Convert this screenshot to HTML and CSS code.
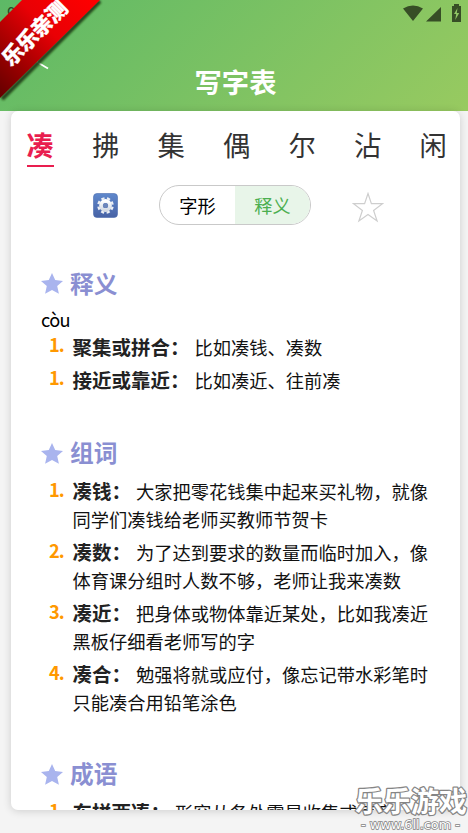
FILE: index.html
```html
<!DOCTYPE html>
<html lang="zh-CN">
<head>
<meta charset="utf-8">
<title>写字表</title>
<link rel="stylesheet" href="styles.css">
</head>
<body>
<svg class="defs" width="0" height="0"><defs>
<linearGradient id="blue" x2="0" y2="1"><stop stop-color="#5f88cc"/><stop offset="1" stop-color="#4762a5"/></linearGradient>
<linearGradient id="silver" x2="0" y2="1"><stop stop-color="#fff"/><stop offset="1" stop-color="#d4dae4"/></linearGradient>
<symbol id="star" viewBox="0 0 22 21"><path d="M11 0l3.2 7.1 7.8.8-5.8 5.2 1.7 7.7-6.9-3.9-6.9 3.9 1.7-7.7L0 7.9l7.8-.8z" fill="#a9b4ee"/></symbol>
</defs></svg>
<header class="header">
  <svg class="back" width="14" height="10" viewBox="0 0 14 10"><path d="M1 1l11 6.500" stroke="#fff" stroke-width="1.700"/></svg>
  <svg class="status" width="60" height="20" viewBox="0 0 60 20"><g fill="#374e26"><path d="M0 4.500Q10-1.500 20 4.500L10 17zM23 17.500L38 3v14.500zM49 2h2V0h5v2h2v16h-9z"/></g><path d="M54.500 4L51 10h2.200l-1 6 4-7h-2.400z" fill="#91c765"/></svg>
  <h1>写字表</h1>
  <span class="clock">9</span>
  <svg class="ribbon" width="104" height="102" viewBox="0 0 104 102">
    <defs><linearGradient id="red" gradientUnits="userSpaceOnUse" x1="0" y1="96" x2="96" y2="0"><stop stop-color="#650000"/><stop offset=".25" stop-color="#990000"/><stop offset=".6" stop-color="#e90005"/><stop offset="1" stop-color="#f00"/></linearGradient>
    <filter id="soft"><feGaussianBlur stdDeviation="1.300"/></filter></defs>
    <path d="M2 99L100 1" stroke="#24451f" stroke-width="4" filter="url(#soft)"/>
    <path d="M0 22L22 0h78L0 98z" fill="url(#red)"/>
    <text class="ribbon-text" transform="translate(11 67.500) rotate(-45)">乐乐亲测</text>
  </svg>
</header>
<main class="card">
  <nav class="chars"><b>凑</b><span>拂</span><span>集</span><span>偶</span><span>尔</span><span>沾</span><span>闲</span></nav>
  <div class="tools">
    <svg class="gear" width="25" height="25" viewBox="0 0 25 25"><rect x=".5" y=".5" width="24" height="24" rx="3.500" fill="url(#blue)" stroke="#496baf" stroke-width=".6"/><g transform="translate(12.500 12.500)"><circle r="4.500" fill="none" stroke="url(#silver)" stroke-width="3.800"/><circle r="7.200" fill="none" stroke="#edf0f5" stroke-width="2.200" stroke-dasharray="3.200 2.455" transform="rotate(10)"/><circle r="2.500" fill="#6d86bb"/></g></svg>
    <div class="toggle"><span>字形</span><span class="active">释义</span></div>
    <svg class="favorite" width="32" height="31" viewBox="0 0 32 31"><path d="M16 1.500l3.400 10.200H30.500l-8.900 6.700 3.500 10.600L16 22.600 6.900 29l3.500-10.600-8.900-6.700h11.100z" fill="none" stroke="#cecece" stroke-width="1.200"/></svg>
  </div>
  <section class="meaning">
    <h2><svg><use href="#star"/></svg><span>释义</span></h2>
    <p class="pinyin">còu</p>
    <ul>
      <li><i>1.</i><p><b>聚集或拼合：</b>比如凑钱、凑数</p></li>
      <li><i>1.</i><p><b>接近或靠近：</b>比如凑近、往前凑</p></li>
    </ul>
  </section>
  <section class="words">
    <h2><svg><use href="#star"/></svg><span>组词</span></h2>
    <ul>
      <li><i>1.</i><p><b>凑钱：</b>大家把零花钱集中起来买礼物，就像<br>同学们凑钱给老师买教师节贺卡</p></li>
      <li><i>2.</i><p><b>凑数：</b>为了达到要求的数量而临时加入，像<br>体育课分组时人数不够，老师让我来凑数</p></li>
      <li><i>3.</i><p><b>凑近：</b>把身体或物体靠近某处，比如我凑近<br>黑板仔细看老师写的字</p></li>
      <li><i>4.</i><p><b>凑合：</b>勉强将就或应付，像忘记带水彩笔时<br>只能凑合用铅笔涂色</p></li>
    </ul>
  </section>
  <section class="idioms">
    <h2><svg><use href="#star"/></svg><span>成语</span></h2>
    <ul><li><i>1.</i><p><b>东拼西凑：</b>形容从各处零星收集或凑齐</p></li></ul>
  </section>
</main>
<div class="watermark">
  <svg width="114" height="48" viewBox="0 0 114 48"><text x="1" y="28" class="brand" textLength="112">乐乐游戏</text><text x="7" y="45" class="url" textLength="99" lengthAdjust="spacingAndGlyphs">- www.6ll.com -</text></svg>
</div>
</body>
</html>
```
FILE: styles.css
```css
* { box-sizing: border-box; }
body { margin: 0; width: 468px; height: 833px; overflow: hidden; position: relative; background: #f4f4f4; color: #111; font-family: "Noto Sans CJK SC", sans-serif; }
h1, h2, p, ul { margin: 0; padding: 0; }
.defs { position: absolute; }
.header { height: 110.5px; position: relative; padding: 61px 0 0 3px; background: linear-gradient(135deg, #5db966, #98ca60); }
.header h1 { color: #fff; font-size: 27.3px; line-height: 40px; text-align: center; font-weight: 700; }
.ribbon { position: absolute; top: 0; left: 0; }
.ribbon-text { fill: #fff; font-size: 21px; font-weight: 900; letter-spacing: -.6px; stroke: #fff; stroke-width: .3px; }
.back { position: absolute; left: 36px; top: 61px; }
.status { position: absolute; left: 403px; top: 4px; }
.clock { position: absolute; left: 7px; top: 5px; font: 16px/18px Roboto, sans-serif; color: #264b2b; }
.card { position: relative; margin: .5px 8px 0 11px; height: 699px; border-radius: 7px; background: #fff; overflow: hidden; box-shadow: 0 1px 8px rgba(0, 0, 0, .16); }
.chars { display: flex; gap: 38px; padding: 14px 0 0 15.5px; height: 57px; font-size: 27.3px; line-height: 39px; color: #333; }
.chars > * { flex: 0 0 27.5px; height: 42px; }
.chars b { color: #e91e4f; border-bottom: 2px solid #e91e4f; }
.tools { display: flex; align-items: center; padding-left: 82px; margin-top: 17px; height: 40px; }
.toggle { display: flex; width: 152px; height: 40px; margin-left: 41px; border: 1px solid #c9c9c9; border-radius: 20px; overflow: hidden; font-size: 18.2px; line-height: 38px; text-align: center; color: #000; }
.toggle span { flex: 1; }
.toggle .active { background: #e8f5e9; color: #4caf50; }
.favorite { margin: 4px 0 0 41px; }
section { padding: 0 28px 0 30px; }
section h2 { display: flex; align-items: center; gap: 7px; height: 36px; font-size: 23.7px; line-height: 36px; color: #8a8fd2; }
section h2 svg { width: 22px; height: 21px; }
section h2 span { margin-top: -2px; }
.meaning { height: 169.5px; margin-top: 40.5px; }
.words { height: 321px; }
.pinyin { font-size: 18.2px; line-height: 28px; height: 28px; margin-top: 3px; color: #000; letter-spacing: -.7px; }
ul { list-style: none; }
li { display: flex; margin-bottom: 5px; font-size: 18.25px; line-height: 28px; color: #111; white-space: nowrap; }
li i { flex: 0 0 31.5px; padding-left: 8px; font-style: normal; font-weight: 700; color: #ff9800; margin-top: -2.5px; letter-spacing: -1px; }
li b { font-size: 19.5px; line-height: 20px; color: #222; margin-right: 5px; }
.words ul, .idioms ul { padding-top: 6px; }
.watermark { position: absolute; left: 354px; top: 784px; height: 48px; }
.brand { font-size: 28px; font-weight: 700; fill: #fff; stroke: #858585; stroke-width: 2.5px; stroke-linejoin: round; paint-order: stroke; }
.url { font: 13px "DejaVu Sans", sans-serif; fill: #fff; stroke: #888; stroke-width: 1.6px; paint-order: stroke; }
```
